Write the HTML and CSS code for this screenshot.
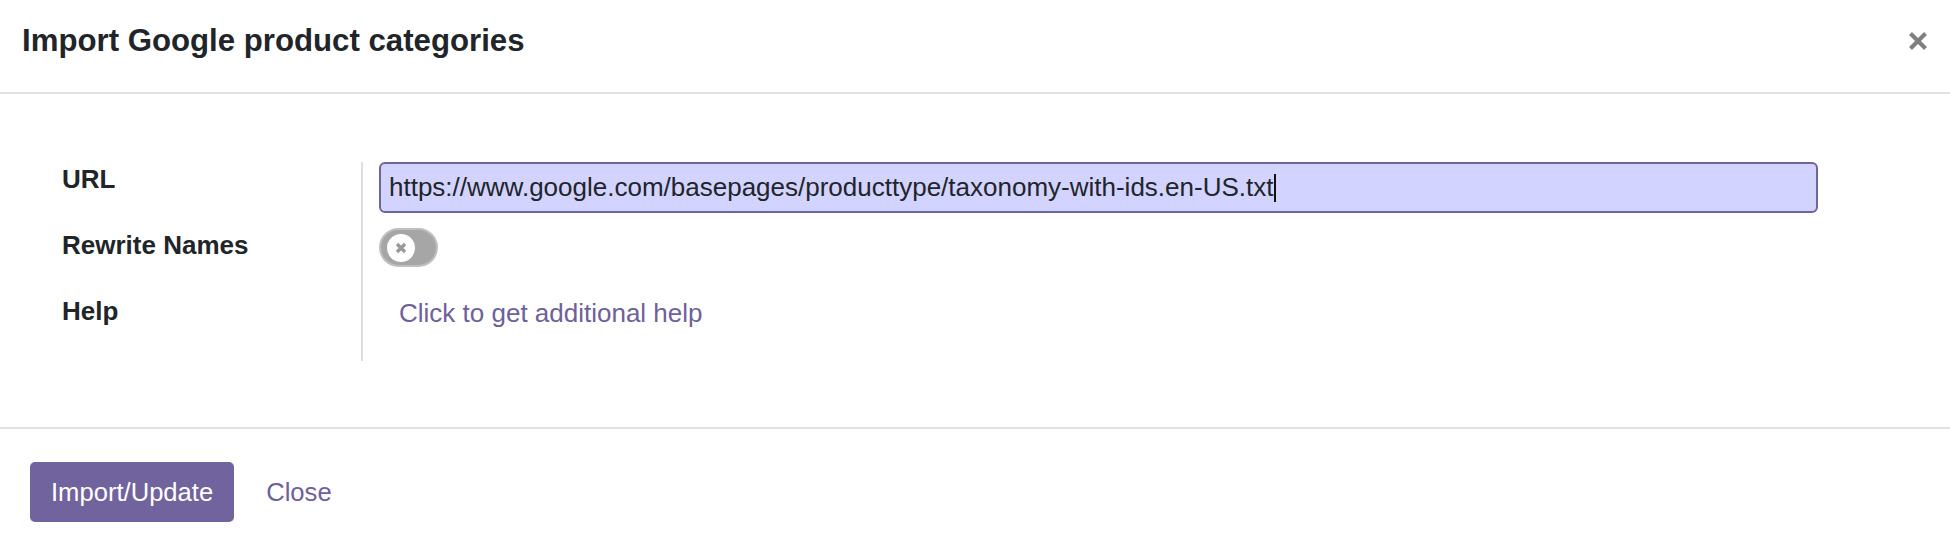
FILE: index.html
```html
<!DOCTYPE html>
<html lang="en">
<head>
<meta charset="utf-8">
<title>Import Google product categories</title>
<link rel="stylesheet" href="styles.css">
</head>
<body>
<div class="modal">
  <header class="modal-header">
    <h4 class="modal-title">Import Google product categories</h4>
    <button class="btn-close" aria-label="Close">
      <svg width="20" height="20" viewBox="0 0 20 20"><path d="M2.5 2.5 L17.5 17.5 M17.5 2.5 L2.5 17.5" stroke="#7f7f7f" stroke-width="4.2" fill="none"/></svg>
    </button>
  </header>
  <main class="modal-body">
    <div class="group">
      <div class="lbl">URL</div>
      <div class="fld">
        <div class="input">https://www.google.com/basepages/producttype/taxonomy-with-ids.en-US.txt<span class="caret"></span></div>
      </div>
      <div class="lbl">Rewrite Names</div>
      <div class="fld">
        <span class="switch"><span class="knob"><svg width="16" height="16" viewBox="0 0 16 16"><path d="M4 4 L12 12 M12 4 L4 12" stroke="#9a9a9a" stroke-width="3.4" fill="none"/></svg></span></span>
      </div>
      <div class="lbl">Help</div>
      <div class="fld">
        <a class="help-link" href="#">Click to get additional help</a>
      </div>
    </div>
  </main>
  <footer class="modal-footer">
    <button class="btn btn-primary">Import/Update</button>
    <button class="btn btn-link">Close</button>
  </footer>
</div>
</body>
</html>
```

FILE: styles.css
```css
html, body {
  margin: 0;
  padding: 0;
  background: #ffffff;
}
body {
  font-family: "Liberation Sans", Arial, sans-serif;
  font-size: 26px;
  color: #212529;
}
.modal {
  width: 1950px;
  height: 552px;
  display: flex;
  flex-direction: column;
}
.modal-header {
  box-sizing: border-box;
  height: 94px;
  padding: 0 22px 10px 22px;
  display: flex;
  align-items: center;
  justify-content: space-between;
  border-bottom: 2px solid #dee2e6;
}
.modal-title {
  margin: 0;
  font-size: 31.2px;
  font-weight: bold;
  line-height: 38px;
  color: #212529;
}
.btn-close {
  border: 0;
  background: transparent;
  padding: 0;
  margin: 0;
  width: 20px;
  height: 20px;
  display: flex;
  align-items: center;
  justify-content: center;
}
.modal-body {
  box-sizing: border-box;
  height: 335px;
  padding: 68px 132px 0 62px;
  border-bottom: 2px solid #dee2e6;
}
.group {
  display: grid;
  grid-template-columns: 299px 1fr;
  grid-template-rows: 66px 66px 67px;
}
.lbl {
  font-weight: bold;
  line-height: 34px;
}
.fld {
  border-left: 2px solid #dedede;
  padding-left: 16px;
}
.input {
  box-sizing: border-box;
  height: 51px;
  border: 2px solid #71639e;
  border-radius: 6px;
  background: #d3d3ff;
  padding: 0 8px;
  line-height: 43px;
  color: #212529;
  white-space: nowrap;
  display: flex;
  align-items: center;
}
.caret {
  display: inline-block;
  width: 2px;
  height: 28px;
  background: #111;
  margin-left: 1px;
}
.switch {
  box-sizing: border-box;
  display: flex;
  align-items: center;
  width: 59px;
  height: 39px;
  border-radius: 20px;
  background: #a6a6a6;
  border: 2px solid #bcc0c4;
  padding-left: 6px;
}
.knob {
  width: 28px;
  height: 28px;
  border-radius: 50%;
  background: #ffffff;
  display: flex;
  align-items: center;
  justify-content: center;
}
.help-link {
  display: inline-block;
  padding-left: 20px;
  line-height: 38px;
  color: #6e609b;
  text-decoration: none;
}
.modal-footer {
  flex: 1;
  display: flex;
  align-items: flex-start;
  padding: 33px 30px 0;
  gap: 32px;
}
.btn {
  font-family: inherit;
  font-size: 25.6px;
  border: 0;
  margin: 0;
  cursor: pointer;
}
.btn-primary {
  height: 60px;
  padding: 0 21px;
  background: #71639e;
  color: #ffffff;
  border-radius: 5px;
}
.btn-link {
  height: 60px;
  padding: 0;
  background: transparent;
  color: #6e609b;
}
```
